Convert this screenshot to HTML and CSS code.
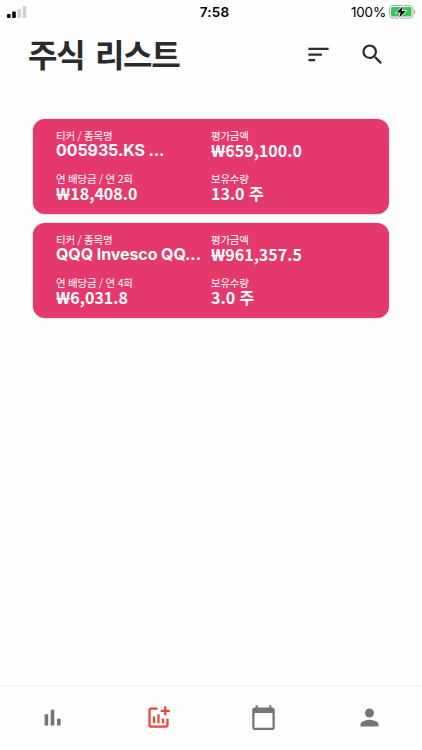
FILE: index.html
```html
<!DOCTYPE html>
<html lang="ko">
<head>
    <meta charset="UTF-8">
    <meta name="viewport" content="width=device-width, initial-scale=1.0">
    <title>주식 리스트</title>
    <link rel="stylesheet" href="styles.css">
</head>
<body>
    <div class="status-bar">
        <svg class="signal" viewBox="0 0 20 12">
            <rect x="0" y="8" width="3.6" height="4" rx="1" />
            <rect x="5.2" y="5.5" width="3.6" height="6.5" rx="1" />
            <rect class="off" x="10.4" y="3" width="3.6" height="9" rx="1" />
            <rect class="off" x="15.6" y="0" width="3.6" height="12" rx="1" />
        </svg>
        <span class="time">7:58</span>
        <div class="power">
            <span>100%</span>
            <svg class="battery" viewBox="0 0 27 14">
                <rect x="0.5" y="0.5" width="23.5" height="12.6" rx="3.6" fill="#fff" stroke="#aaa" />
                <rect x="2" y="2" width="20.5" height="9.6" rx="2.2" fill="#35c759" />
                <path d="M25.2 4.7v4.2c.8-.3 1.3-1.1 1.3-2.1s-.5-1.8-1.3-2.1z" fill="#aaa" />
                <path d="M13.9 1.2L7.6 7.6h4l-1.3 5L16.8 6h-4.2z" fill="#000" stroke="#fff" stroke-width="1.4" paint-order="stroke" />
            </svg>
        </div>
    </div>
    <header>
        <h1>주식 리스트</h1>
        <div class="actions">
            <svg class="icon" viewBox="0 0 24 24"><path d="M3 18h6v-2H3v2zM3 6v2h18V6H3zm0 7h12v-2H3v2z" /></svg>
            <svg class="icon" viewBox="0 0 24 24"><path d="M15.5 14h-.79l-.28-.27A6.471 6.471 0 0 0 16 9.5 6.5 6.5 0 1 0 9.5 16c1.61 0 3.09-.59 4.23-1.57l.27.28v.79l5 4.99L20.49 19l-4.99-5zm-6 0C7.01 14 5 11.99 5 9.5S7.01 5 9.5 5 14 7.01 14 9.5 11.99 14 9.5 14z" /></svg>
        </div>
    </header>
    <main>
        <section class="card">
            <div class="item">
                <p class="label">티커 / 종목명</p>
                <p class="value name">005935.KS ...</p>
            </div>
            <div class="item">
                <p class="label">평가금액</p>
                <p class="value"><span class="won">₩</span>659,100.0</p>
            </div>
            <div class="item">
                <p class="label">연 배당금 / 연 2회</p>
                <p class="value"><span class="won">₩</span>18,408.0</p>
            </div>
            <div class="item">
                <p class="label">보유수량</p>
                <p class="value">13.0 주</p>
            </div>
        </section>
        <section class="card">
            <div class="item">
                <p class="label">티커 / 종목명</p>
                <p class="value name">QQQ Invesco QQ...</p>
            </div>
            <div class="item">
                <p class="label">평가금액</p>
                <p class="value"><span class="won">₩</span>961,357.5</p>
            </div>
            <div class="item">
                <p class="label">연 배당금 / 연 4회</p>
                <p class="value"><span class="won">₩</span>6,031.8</p>
            </div>
            <div class="item">
                <p class="label">보유수량</p>
                <p class="value">3.0 주</p>
            </div>
        </section>
    </main>
    <nav>
        <a><svg class="icon" viewBox="0 0 24 24"><path d="M5 9.2h3.2V19H5zM10.4 5h3.2v14h-3.2zm5.6 8h3.2v6H16z" /></svg></a>
        <a class="active"><svg class="icon" viewBox="0 0 24 24"><path d="M22 5v2h-3v3h-2V7h-3V5h3V2h2v3h3zm-3 14H5V5h6V3H5c-1.1 0-2 .9-2 2v14c0 1.1.9 2 2 2h14c1.1 0 2-.9 2-2v-6h-2v6zm-4-6v4h2v-4h-2zm-4 4h2V9h-2v8zm-2 0v-6H7v6h2z" /></svg></a>
        <a><svg class="icon" viewBox="0 0 24 24"><path d="M20 3h-1V1h-2v2H7V1H5v2H4c-1.1 0-2 .9-2 2v16c0 1.1.9 2 2 2h16c1.1 0 2-.9 2-2V5c0-1.1-.9-2-2-2zm0 18H4V8h16v13z" /></svg></a>
        <a><svg class="icon" viewBox="0 0 24 24"><path d="M12 12c2.21 0 4-1.79 4-4s-1.79-4-4-4-4 1.79-4 4 1.79 4 4 4zm0 2c-2.67 0-8 1.34-8 4v2h16v-2c0-2.66-5.33-4-8-4z" /></svg></a>
    </nav>
</body>
</html>
```

FILE: styles.css
```css
* {
    margin: 0;
    padding: 0;
    box-sizing: border-box;
}

body {
    height: 100vh;
    display: flex;
    flex-direction: column;
    overflow: hidden;
    background-color: #fefefe;
    color: #2b2b2b;
    font-family: "Noto Sans CJK KR", sans-serif;
}

.status-bar {
    display: grid;
    grid-template-columns: 1fr auto 1fr;
    align-items: center;
    height: 24px;
    padding: 0 6px 0 7px;
    color: #000;
    font-family: Inter, sans-serif;
    font-size: 13.5px;
}

.signal {
    width: 20px;
    height: 12px;
}

.signal .off {
    fill: #d2d2d2;
}

.time {
    padding-left: 6px;
    font-weight: 600;
    letter-spacing: 0.2px;
}

.power {
    display: flex;
    justify-content: flex-end;
    align-items: center;
    gap: 3px;
    letter-spacing: -0.2px;
}

.battery {
    width: 27px;
    height: 14px;
}

.icon {
    display: block;
    width: 27px;
    height: 27px;
    fill: currentColor;
}

header {
    display: flex;
    justify-content: space-between;
    align-items: center;
    height: 60px;
    padding: 0 36px 0 28px;
}

h1 {
    padding-bottom: 2px;
    font-size: 32px;
    line-height: 46px;
    font-weight: 700;
    letter-spacing: -1.3px;
    word-spacing: 3px;
}

.actions {
    display: flex;
    gap: 27px;
}

main {
    flex: 1;
    padding: 34.5px 33px 0;
}

.card {
    display: grid;
    grid-template-columns: 155px 1fr;
    align-content: start;
    row-gap: 10px;
    height: 95px;
    margin-bottom: 9.5px;
    padding: 9px 23px 0;
    border-radius: 12px;
    background-color: #e5396d;
    box-shadow: 0 0 2px rgba(0, 0, 0, 0.3);
    color: #fff;
}

.item {
    height: 33px;
    white-space: nowrap;
}

.label {
    font-size: 10.5px;
    line-height: 15px;
    letter-spacing: -0.25px;
}

.value {
    font-size: 16px;
    line-height: 15px;
    font-weight: 700;
}

.won {
    display: inline-block;
    margin-right: 2.5px;
    font-family: "Noto Sans", sans-serif;
    transform: scaleX(1.2);
    transform-origin: left;
}

.name {
    font-family: Inter, sans-serif;
    line-height: 14px;
    letter-spacing: -0.08px;
}

nav {
    display: flex;
    height: 65px;
    padding-bottom: 2px;
    border-top: 2px solid #f5f5f5;
}

nav a {
    flex: 1;
    display: flex;
    align-items: center;
    justify-content: center;
    color: #757575;
}

nav .active {
    color: #ea4438;
}
```
